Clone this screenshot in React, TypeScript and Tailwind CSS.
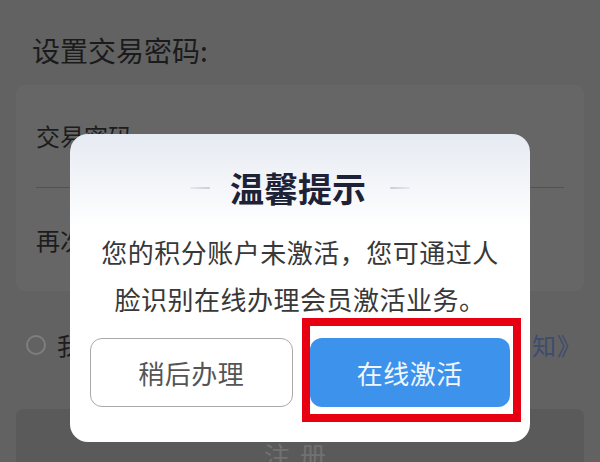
import React from "react";

const RegisterPage: React.FC = () => {
  return (
    <div className="px-4">
      <h2 className="pl-4 pt-[32px] text-[28px] leading-[36px] text-[#1b1b1b]">设置交易密码:</h2>

      <div className="mt-[17px] rounded-lg bg-[#666666] px-5">
        <div className="flex h-[103px] items-center border-b border-[#525252] text-[24px] text-[#1c1c1c]">
          交易密码
        </div>
        <div className="flex h-[103px] items-center text-[24px] text-[#1c1c1c]">再次输入交易密码</div>
      </div>

      <div className="mt-[34px] flex h-[40px] items-center pl-[10px] whitespace-nowrap">
        <span className="h-5 w-5 shrink-0 rounded-full border-2 border-[#7e7e7e]" />
        <span className="ml-[11px] text-[24px] tracking-[1px] text-[#1c1c1c]">
          我已阅读并同意
          <span className="text-[#3d4c6f]">《积分商城会员注册服务须知》</span>
        </span>
      </div>

      <div className="mt-[44px] flex h-[90px] items-center justify-center rounded-lg bg-[#5a5a5a] text-[26px] tracking-[10px] text-[#717171]">
        注册
      </div>
    </div>
  );
};

const ActivateDialog: React.FC = () => {
  return (
    <div className="absolute left-[70px] top-[134px] flex h-[308px] w-[460px] flex-col items-center rounded-[18px] bg-linear-to-b from-[#e6eaf2] from-0% to-white to-[30%] px-5 pt-[34px]">
      <div className="flex items-center">
        <span className="mr-[20px] h-[2px] w-[20px] rounded-full bg-linear-to-r from-[#e6e9ee] to-[#c9cdd4]" />
        <h3 className="text-[34px] leading-[40px] font-bold text-[#1d2236]">温馨提示</h3>
        <span className="ml-[24px] h-[2px] w-[20px] rounded-full bg-linear-to-r from-[#c9cdd4] to-[#e6e9ee]" />
      </div>

      <p className="mt-[20px] text-center text-[26px] leading-[47px] tracking-[0.5px] text-[#383838]">
        您的积分账户未激活，您可通过人
        <br />
        脸识别在线办理会员激活业务。
      </p>

      <div className="mt-[16px] flex w-full gap-[17px]">
        <button className="flex h-[69px] flex-1 items-center justify-center rounded-xl border border-[#a9a9a9] bg-white text-[26px] tracking-[0.5px] text-[#555555]">
          稍后办理
        </button>
        <button className="flex h-[69px] flex-1 items-center justify-center rounded-xl bg-[#3d93eb] text-[26px] tracking-[0.5px] text-[#f2f7ff]">
          在线激活
        </button>
      </div>

      {/* annotation box around the primary button */}
      <div className="absolute left-[232px] top-[184px] h-[104px] w-[219px] border-[8px] border-[#e60012]" />
    </div>
  );
};

export default function App() {
  return (
    <div className="relative h-[462px] w-[600px] overflow-hidden bg-[#626262] font-['Noto_Sans_CJK_SC','Noto_Sans',sans-serif]">
      <RegisterPage />
      <ActivateDialog />
    </div>
  );
}
